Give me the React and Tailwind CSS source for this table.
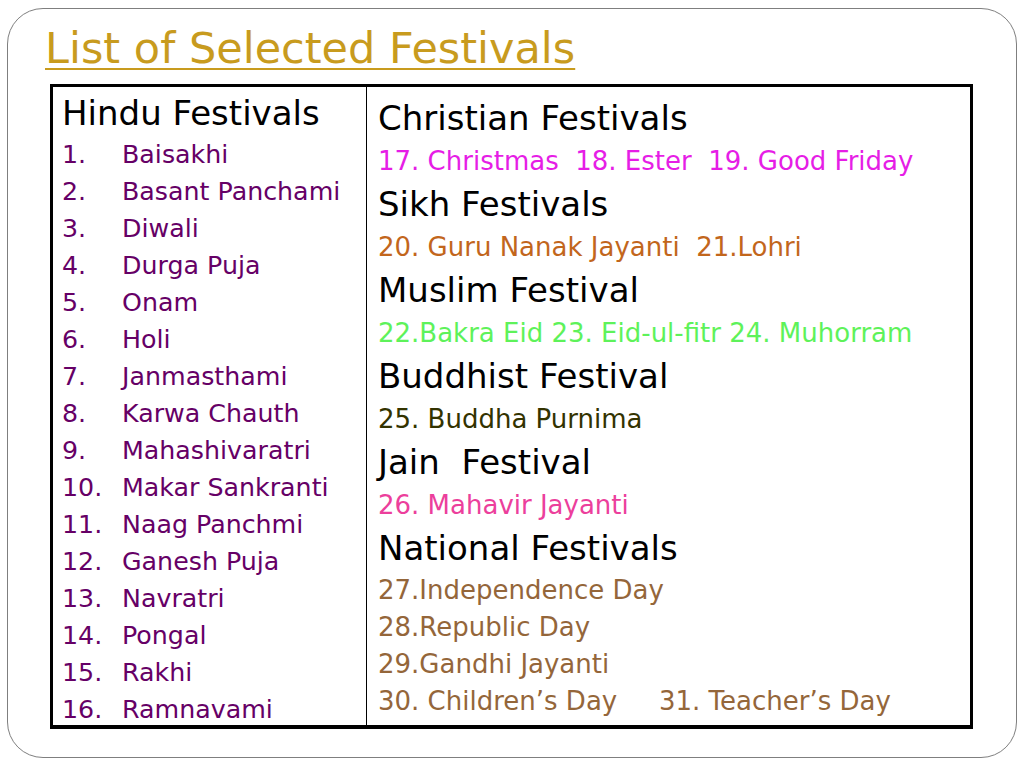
const hindu = [
  "Baisakhi",
  "Basant Panchami",
  "Diwali",
  "Durga Puja",
  "Onam",
  "Holi",
  "Janmasthami",
  "Karwa Chauth",
  "Mahashivaratri",
  "Makar Sankranti",
  "Naag Panchmi",
  "Ganesh Puja",
  "Navratri",
  "Pongal",
  "Rakhi",
  "Ramnavami",
]

const groups = [
  { title: "Christian Festivals", items: "17. Christmas  18. Ester  19. Good Friday", color: "text-[#e61de6]" },
  { title: "Sikh Festivals", items: "20. Guru Nanak Jayanti  21.Lohri", color: "text-[#c2661c]" },
  { title: "Muslim Festival", items: "22.Bakra Eid 23. Eid-ul-fitr 24. Muhorram", color: "text-[#5ef25a]" },
  { title: "Buddhist Festival", items: "25. Buddha Purnima", color: "text-[#333300]" },
  { title: "Jain  Festival", items: "26. Mahavir Jayanti", color: "text-[#ec3f9c]" },
]

const font = "font-['DejaVu_Sans',Verdana,sans-serif]"

export default function App() {
  return (
    <div className={`w-[1024px] h-[768px] bg-white px-[7px] pt-[8px] ${font}`}>
      <div className="w-[1010px] h-[750px] rounded-[36px] border border-[#7f7f7f] pt-[14px]">
        <h1 className="ml-[37px] text-[43px] leading-[50px] text-[#c89b1e] underline decoration-2 underline-offset-[5px]">
          List of Selected Festivals
        </h1>

        <div className="ml-[42px] mt-[11px] w-[923px] h-[645px] border-[3px] border-b-4 border-black flex">
          {/* left column */}
          <div className="w-[314px] border-r border-black pl-[9px] pt-[3px]">
            <div className="h-[46px] text-[34px] leading-[46px] text-black">Hindu Festivals</div>
            {hindu.map((name, i) => (
              <div key={name} className="flex h-[37px] items-center text-[25.3px] text-[#660066]">
                <span className="w-[60px]">{i + 1}.</span>
                <span>{name}</span>
              </div>
            ))}
          </div>

          {/* right column */}
          <div className="flex-1 pl-[11px] pt-[10px]">
            {groups.map((g) => (
              <div key={g.title}>
                <div className="h-[43px] flex items-center text-[34px] text-black whitespace-pre">{g.title}</div>
                <div className={`h-[43px] flex items-center text-[26px] whitespace-pre ${g.color}`}>{g.items}</div>
              </div>
            ))}
            <div className="h-[43px] flex items-center text-[34px] text-black">National Festivals</div>
            <div className="mt-[2px] text-[26px] text-[#94663a]">
              <div className="h-[37px] flex items-center">27.Independence Day</div>
              <div className="h-[37px] flex items-center">28.Republic Day</div>
              <div className="h-[37px] flex items-center">29.Gandhi Jayanti</div>
              <div className="h-[37px] flex items-center">
                <span className="w-[281px]">30. Children’s Day</span>
                <span>31. Teacher’s Day</span>
              </div>
            </div>
          </div>
        </div>
      </div>
    </div>
  )
}
